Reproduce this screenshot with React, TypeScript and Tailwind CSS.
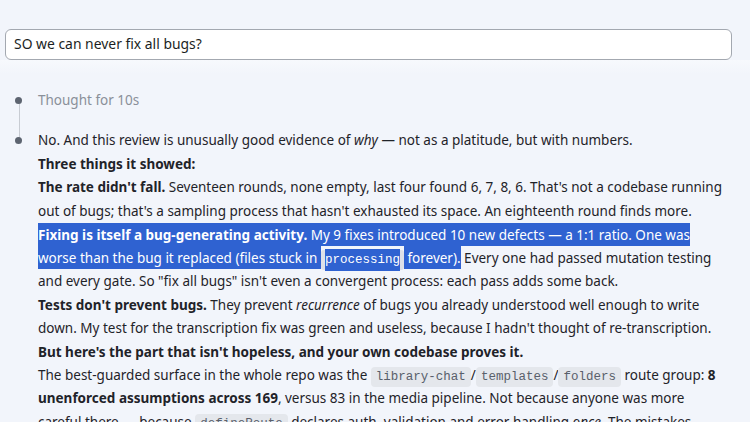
import React from "react";

const Code = ({ children }: { children: React.ReactNode }) => (
  <code className="rounded-[4px] bg-[#e4e7ec] px-[5px] py-[3px] font-['Liberation_Mono',monospace] text-[12.5px] leading-none text-[#59606b]">
    {children}
  </code>
);

const Sel = ({ children }: { children: React.ReactNode }) => (
  <span className="bg-[#2f62d1] py-[2.5px] text-white">{children}</span>
);

export default function App() {
  return (
    <div className="h-[422px] w-[750px] overflow-hidden bg-[#f2f5fb] font-['Noto_Sans',sans-serif] text-[13.5px] text-[#1f2329]">
      <div className="px-[5px] pt-[29px]">
        <div className="flex h-[31px] w-[727px] items-center rounded-[6px] border border-[#a3a8b0] bg-white px-[8px] text-[13.9px] text-[#1b1f24]">
          SO we can never fix all bugs?
        </div>
      </div>
      <div className="h-[14px] bg-gradient-to-b from-[#f7f9fd] to-[#f2f5fb]" />

      <div className="relative pl-[38px] pt-[15px] leading-[23.45px]">
        <div className="absolute left-[18.5px] top-[27px] h-[42px] w-px bg-[#c8ccd3]" />
        <div className="relative">
          <span className="absolute left-[-23px] top-[8px] h-[7px] w-[7px] rounded-full bg-[#5d6470]" />
          <div className="text-[#8a9099]">Thought for 10s</div>
        </div>

        <div className="relative mt-[17px] whitespace-nowrap">
          <span className="absolute left-[-23px] top-[8px] h-[7px] w-[7px] rounded-full bg-[#5d6470]" />
          <p>
            No. And this review is unusually good evidence of <em>why</em> — not as a platitude, but with numbers.
          </p>
          <p className="font-bold">Three things it showed:</p>
          <p>
            <strong>The rate didn't fall.</strong> Seventeen rounds, none empty, last four found 6, 7, 8, 6. That's not a codebase running
            <br />
            out of bugs; that's a sampling process that hasn't exhausted its space. An eighteenth round finds more.
          </p>
          <p>
            <Sel>
              <strong>Fixing is itself a bug-generating activity.</strong> My 9 fixes introduced 10 new defects — a 1:1 ratio. One was
            </Sel>
            <br />
            <Sel>worse than the bug it replaced (files stuck in </Sel>
            <code className="rounded-[3px] bg-[#dde1e8] px-[4px] py-[3px] font-['Liberation_Mono',monospace] text-[12.5px] leading-none">
              <span className="bg-[#2f62d1] py-[4px] text-white">processing</span>
            </code>
            <Sel> forever).</Sel> Every one had passed mutation testing
            <br />
            and every gate. So "fix all bugs" isn't even a convergent process: each pass adds some back.
          </p>
          <p>
            <strong>Tests don't prevent bugs.</strong> They prevent <em>recurrence</em> of bugs you already understood well enough to write
            <br />
            down. My test for the transcription fix was green and useless, because I hadn't thought of re-transcription.
          </p>
          <p className="font-bold">But here's the part that isn't hopeless, and your own codebase proves it.</p>
          <p>
            The best-guarded surface in the whole repo was the <Code>library-chat</Code>/<Code>templates</Code>/<Code>folders</Code> route group: <strong>8</strong>
            <br />
            <strong>unenforced assumptions across 169</strong>, versus 83 in the media pipeline. Not because anyone was more
            <br />
            careful there — because <Code>defineRoute</Code> declares auth, validation and error handling <em>once</em>. The mistakes
          </p>
        </div>
      </div>
    </div>
  );
}
